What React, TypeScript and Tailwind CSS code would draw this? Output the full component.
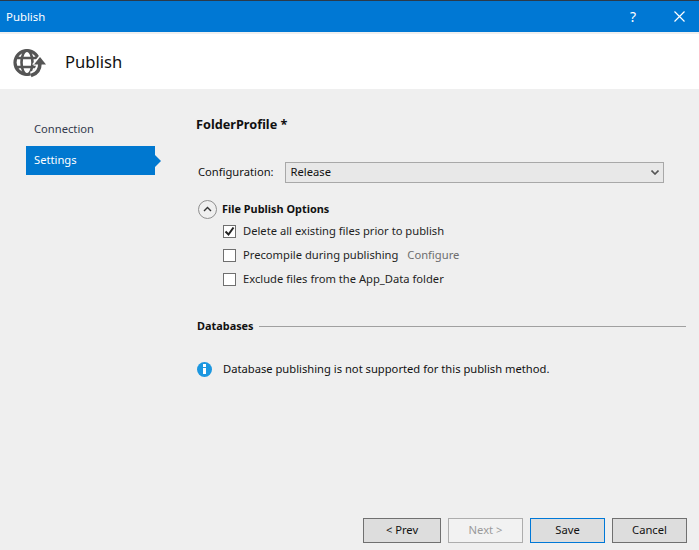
function PublishIcon({ size }: { size: number }) {
  return (
    <svg width={size} height={size} viewBox="0 0 34 34" fill="none">
      <circle cx="14" cy="17.5" r="12" stroke="#555555" strokeWidth="3.2" />
      <ellipse cx="14" cy="17.5" rx="5.5" ry="12" stroke="#555555" strokeWidth="2.6" />
      <path d="M2 13h24M2 22h24" stroke="#555555" strokeWidth="2.6" />
      {/* white halo cuts the globe behind the arrow */}
      <path d="M27 18C27 24 24 29 18 30.5" stroke="#ffffff" strokeWidth="7.5" />
      <path d="M27 9.5L35 19.5H19z" fill="#ffffff" />
      <path d="M27 18C27 24 24 29 18 30.5" stroke="#555555" strokeWidth="3.6" />
      <path d="M27 12L33 19.5H21z" fill="#555555" />
    </svg>
  )
}

function CheckRow({ label, checked, extra }: { label: string; checked?: boolean; extra?: string }) {
  return (
    <div className="flex items-center h-[24px]">
      <div className="w-[13px] h-[13px] border border-[#6f6f6f] bg-white flex items-center justify-center">
        {checked && (
          <svg width="11" height="11" viewBox="0 0 11 11" fill="none">
            <path d="M1.5 5.5l3 3 5-7" stroke="#222222" strokeWidth="2" />
          </svg>
        )}
      </div>
      <span className="ml-[7px] text-[#1e1e1e]">{label}</span>
      {extra && <span className="ml-[9px] text-[#6d6d6d]">{extra}</span>}
    </div>
  )
}

function FooterButton({ label, className }: { label: string; className: string }) {
  return (
    <div className={`h-[25px] border flex items-center justify-center ${className}`}>{label}</div>
  )
}

export default function App() {
  return (
    <div className="w-[699px] h-[550px] flex flex-col overflow-hidden bg-[#efefef] text-[11.2px] text-[#111111] font-['Noto_Sans','Open_Sans',sans-serif]">
      <div className="h-[32px] shrink-0 bg-[#0078d4] border-t border-[#2b3a4a] flex items-center text-white">
        <span className="ml-[6px] text-[11.4px]">Publish</span>
        <span className="ml-auto text-[14px]">?</span>
        <svg className="ml-[38px] mr-[14px]" width="11" height="11" viewBox="0 0 11 11" fill="none">
          <path d="M.5.5l10 10M10.5.5l-10 10" stroke="#ffffff" strokeWidth="1.2" />
        </svg>
      </div>
      <div className="h-[2px] shrink-0 bg-[#efefef]" />
      <div className="h-[55px] shrink-0 bg-white flex items-center">
        <div className="ml-[13px]">
          <PublishIcon size={34} />
        </div>
        <span className="ml-[18px] mt-[2px] text-[16.6px] text-[#111111]">Publish</span>
      </div>

      <div className="flex flex-1 min-h-0">
        <div className="w-[197px] shrink-0 pl-[26px] pt-[26px]">
          <div className="h-[29px] w-[129px] pl-[8px] flex items-center text-[#333a4d]">Connection</div>
          <div className="relative mt-[2px] h-[29px] w-[129px] pl-[8px] flex items-center bg-[#0078d0] text-white">
            Settings
            <div className="absolute left-full top-[9px] w-0 h-0 border-y-[6px] border-y-transparent border-l-[6px] border-l-[#0078d0]" />
          </div>
        </div>

        <div className="flex-1 flex flex-col min-w-0 pr-[12px]">
          <div className="mt-[26px] -ml-[1px] font-bold text-[12.7px] text-[#111111] leading-[18px]">FolderProfile *</div>

          <div className="mt-[29px] ml-[1px] flex items-center">
            <span>Configuration:</span>
            <div className="ml-[11px] w-[379px] h-[21px] border border-[#a8a8a8] bg-[#e8e8e8] pl-[5px] pr-[4px] flex items-center justify-between">
              <span>Release</span>
              <svg width="8" height="5" viewBox="0 0 8 5" fill="none">
                <path d="M.5.5L4 4 7.5.5" stroke="#555555" strokeWidth="1.6" />
              </svg>
            </div>
          </div>

          <div className="mt-[16px] flex items-center h-[20px]">
            <div className="ml-[1px] w-[19px] h-[19px] rounded-full border border-[#8f8f8f] flex items-center justify-center">
              <svg width="9" height="6" viewBox="0 0 9 6" fill="none">
                <path d="M1 5l3.5-3.5L8 5" stroke="#333333" strokeWidth="1.4" />
              </svg>
            </div>
            <span className="ml-[5px] font-bold text-[10.9px]">File Publish Options</span>
          </div>

          <div className="ml-[26px]">
            <CheckRow label="Delete all existing files prior to publish" checked />
            <CheckRow label="Precompile during publishing" extra="Configure" />
            <CheckRow label="Exclude files from the App_Data folder" />
          </div>

          <div className="mt-[26px] flex items-center h-[18px]">
            <span className="font-bold text-[10.9px]">Databases</span>
            <div className="ml-[5px] mr-[1px] flex-1 h-px bg-[#a0a0a0]" />
          </div>

          <div className="mt-[25px] flex items-center h-[18px]">
            <div className="w-[15px] h-[15px] rounded-full bg-[#1c97e0] flex flex-col items-center justify-center gap-[1px]">
              <div className="w-[2.5px] h-[2.5px] bg-white" />
              <div className="w-[2.5px] h-[6px] bg-white" />
            </div>
            <span className="ml-[11px]">Database publishing is not supported for this publish method.</span>
          </div>

          <div className="mt-auto mb-[7px] flex justify-end gap-[7px]">
            <FooterButton label="< Prev" className="w-[78px] border-[#707070] bg-[#dddddd]" />
            <FooterButton label="Next >" className="w-[75px] border-[#adadad] bg-[#f2f2f2] text-[#9a9a9a]" />
            <FooterButton label="Save" className="w-[75px] border-[#0078d7] bg-[#dddddd]" />
            <FooterButton label="Cancel" className="w-[75px] border-[#707070] bg-[#dddddd]" />
          </div>
        </div>
      </div>
    </div>
  )
}
